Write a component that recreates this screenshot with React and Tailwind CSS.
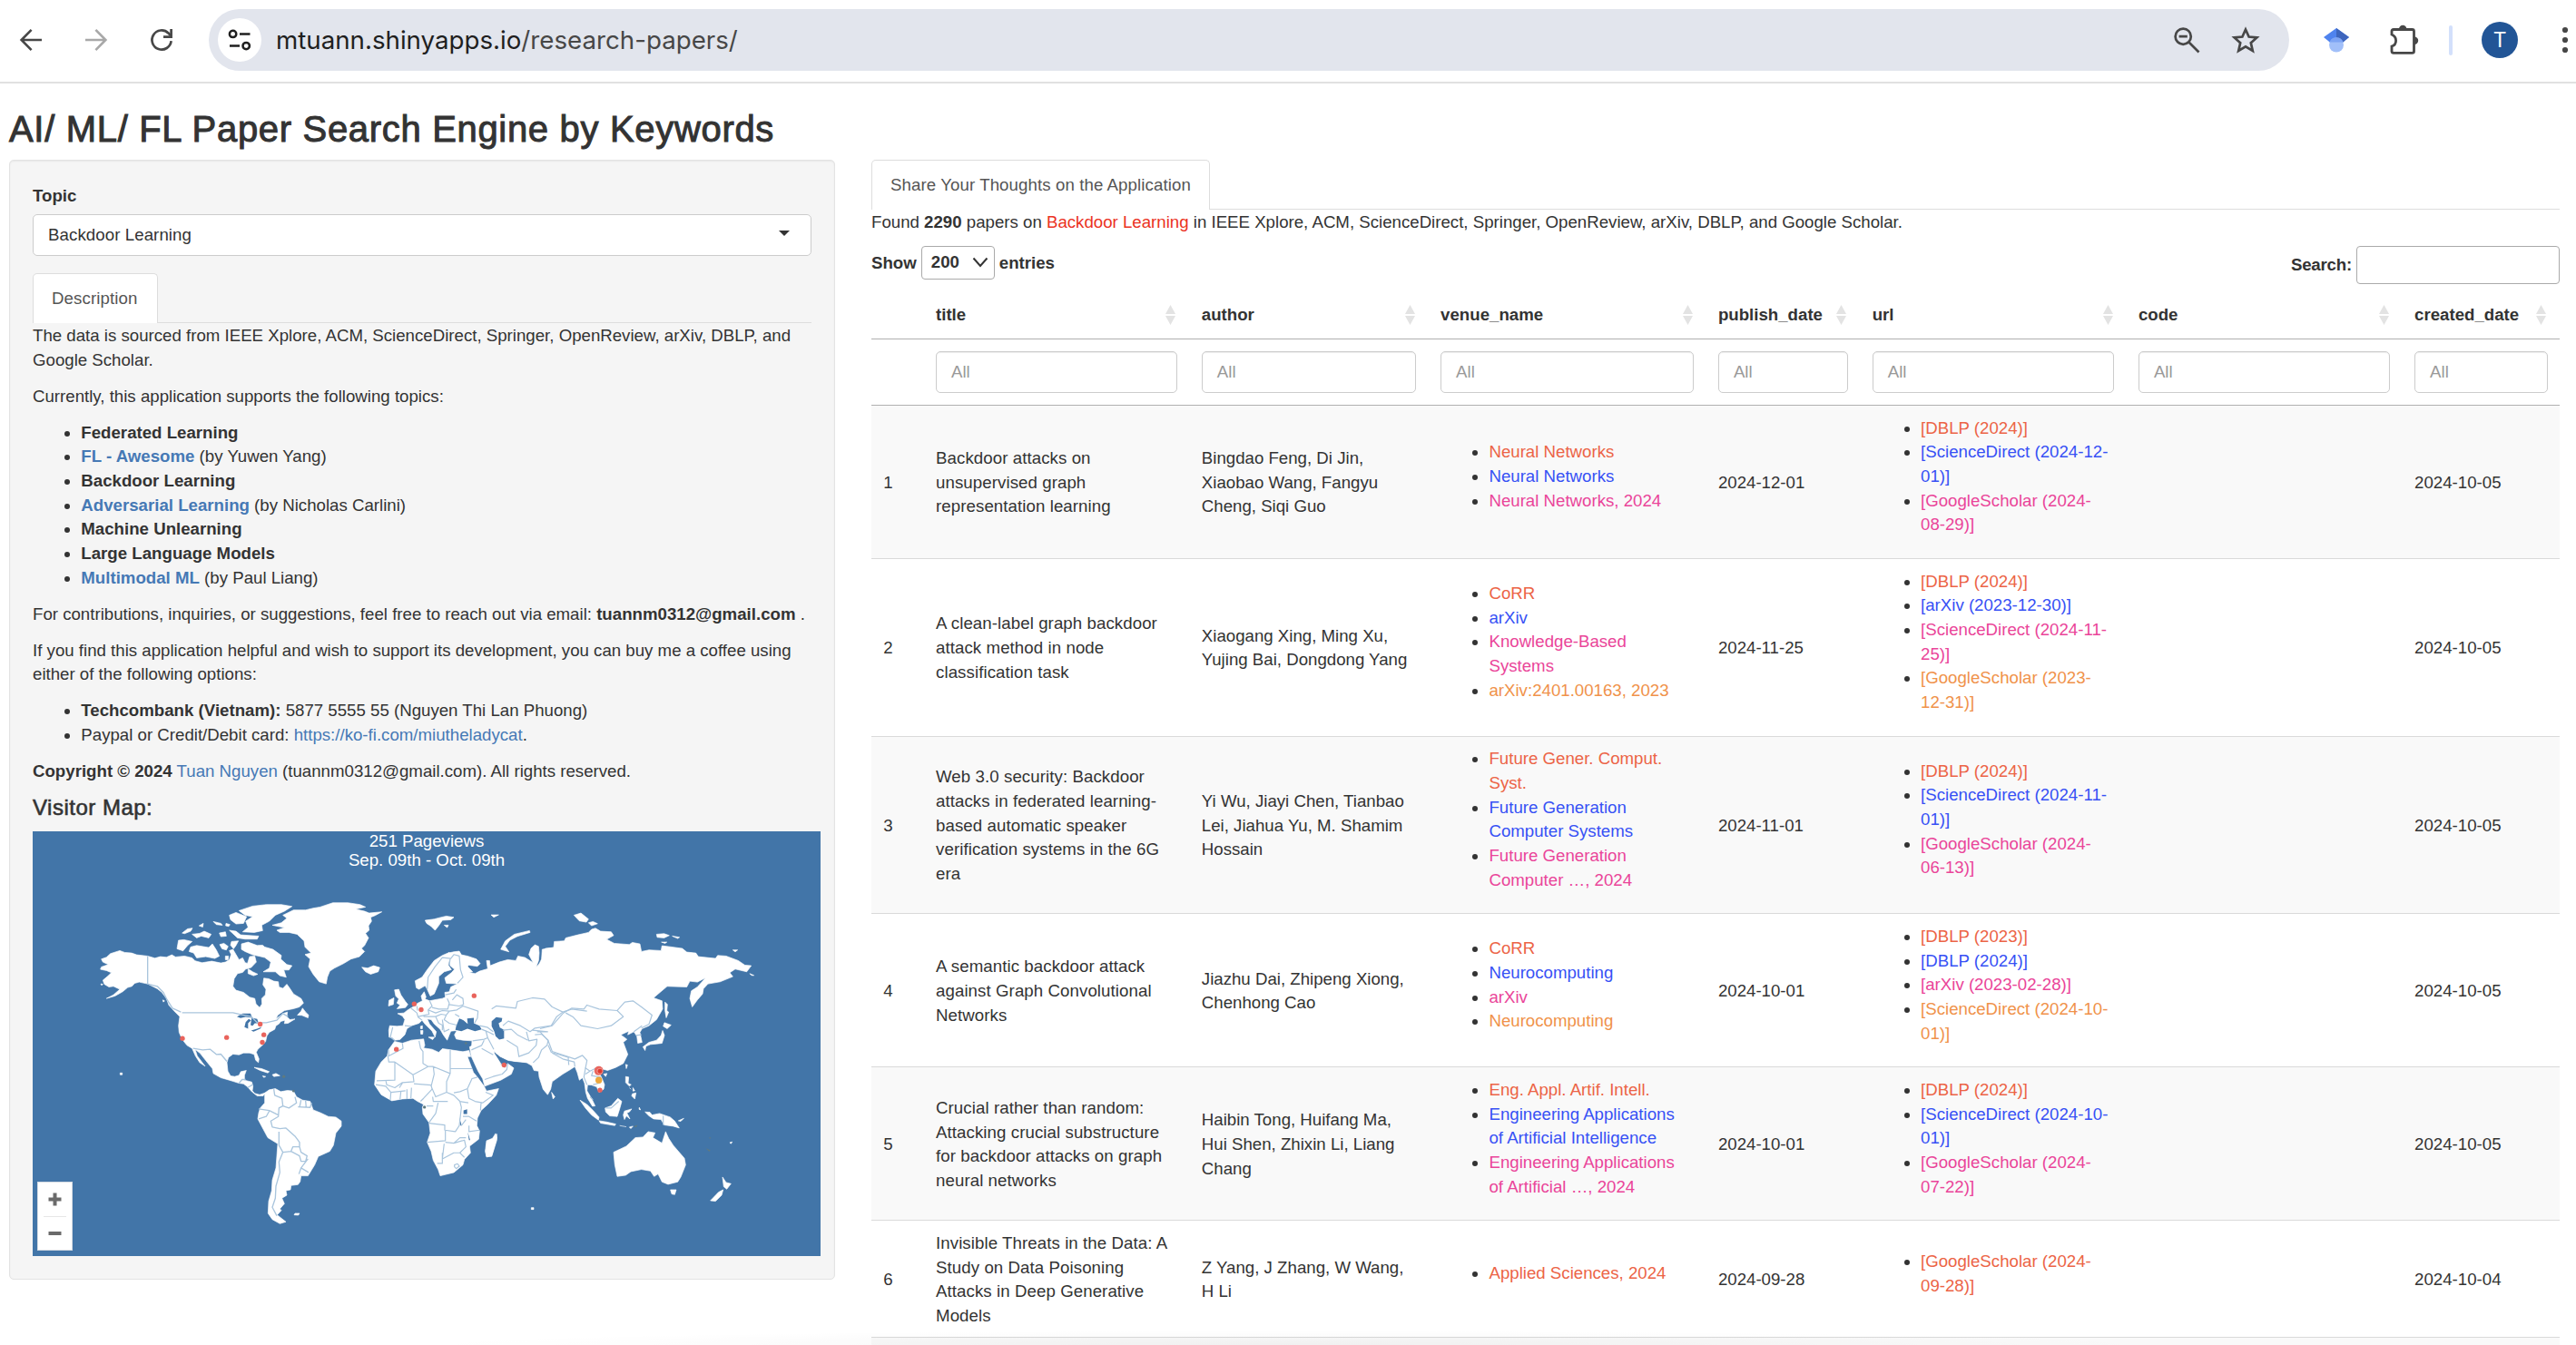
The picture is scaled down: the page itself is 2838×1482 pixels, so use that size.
import React from "react";

const O = "text-[#ec6446]";
const B = "text-[#3751f5]";
const P = "text-[#ea4599]";
const Y = "text-[#f0924a]";
const tones = [O, B, P, Y];

const papers = [
  {
    title: ["Backdoor attacks on", "unsupervised graph", "representation learning"],
    author: ["Bingdao Feng, Di Jin,", "Xiaobao Wang, Fangyu", "Cheng, Siqi Guo"],
    venue: [["Neural Networks"], ["Neural Networks"], ["Neural Networks, 2024"]],
    published: "2024-12-01",
    url: [["[DBLP (2024)]"], ["[ScienceDirect (2024-12-", "01)]"], ["[GoogleScholar (2024-", "08-29)]"]],
    created: "2024-10-05",
  },
  {
    title: ["A clean-label graph backdoor", "attack method in node", "classification task"],
    author: ["Xiaogang Xing, Ming Xu,", "Yujing Bai, Dongdong Yang"],
    venue: [["CoRR"], ["arXiv"], ["Knowledge-Based", "Systems"], ["arXiv:2401.00163, 2023"]],
    published: "2024-11-25",
    url: [["[DBLP (2024)]"], ["[arXiv (2023-12-30)]"], ["[ScienceDirect (2024-11-", "25)]"], ["[GoogleScholar (2023-", "12-31)]"]],
    created: "2024-10-05",
  },
  {
    title: ["Web 3.0 security: Backdoor", "attacks in federated learning-", "based automatic speaker", "verification systems in the 6G", "era"],
    author: ["Yi Wu, Jiayi Chen, Tianbao", "Lei, Jiahua Yu, M. Shamim", "Hossain"],
    venue: [["Future Gener. Comput.", "Syst."], ["Future Generation", "Computer Systems"], ["Future Generation", "Computer …, 2024"]],
    published: "2024-11-01",
    url: [["[DBLP (2024)]"], ["[ScienceDirect (2024-11-", "01)]"], ["[GoogleScholar (2024-", "06-13)]"]],
    created: "2024-10-05",
  },
  {
    title: ["A semantic backdoor attack", "against Graph Convolutional", "Networks"],
    author: ["Jiazhu Dai, Zhipeng Xiong,", "Chenhong Cao"],
    venue: [["CoRR"], ["Neurocomputing"], ["arXiv"], ["Neurocomputing"]],
    published: "2024-10-01",
    url: [["[DBLP (2023)]"], ["[DBLP (2024)]"], ["[arXiv (2023-02-28)]"], ["[ScienceDirect (2024-10-", "01)]"]],
    created: "2024-10-05",
  },
  {
    title: ["Crucial rather than random:", "Attacking crucial substructure", "for backdoor attacks on graph", "neural networks"],
    author: ["Haibin Tong, Huifang Ma,", "Hui Shen, Zhixin Li, Liang", "Chang"],
    venue: [["Eng. Appl. Artif. Intell."], ["Engineering Applications", "of Artificial Intelligence"], ["Engineering Applications", "of Artificial …, 2024"]],
    published: "2024-10-01",
    url: [["[DBLP (2024)]"], ["[ScienceDirect (2024-10-", "01)]"], ["[GoogleScholar (2024-", "07-22)]"]],
    created: "2024-10-05",
  },
  {
    title: ["Invisible Threats in the Data: A", "Study on Data Poisoning", "Attacks in Deep Generative", "Models"],
    author: ["Z Yang, J Zhang, W Wang,", "H Li"],
    venue: [["Applied Sciences, 2024"]],
    published: "2024-09-28",
    url: [["[GoogleScholar (2024-", "09-28)]"]],
    created: "2024-10-04",
  },
];

const columns = ["title", "author", "venue_name", "publish_date", "url", "code", "created_date"];

function Lines({ lines }) {
  return lines.map((l, i) => (
    <span key={i} className="block whitespace-nowrap">{l}</span>
  ));
}

function TonedList({ items }) {
  return (
    <ul className="mb-[13.33px] list-disc pl-[53.33px]">
      {items.map((lines, i) => (
        <li key={i}>
          <span className={tones[i]}>
            {lines.map((l, j) => (
              <React.Fragment key={j}>
                {j > 0 && <br />}
                <span className="whitespace-nowrap">{l}</span>
              </React.Fragment>
            ))}
          </span>
        </li>
      ))}
    </ul>
  );
}

function BrowserBar() {
  return (
    <header className="flex h-[92px] items-center border-b-2 border-[#e1e1e1] bg-white pb-[2px]">
      <svg className="ml-[20px] size-[28px] shrink-0" viewBox="0 0 28 28" fill="none" stroke="#474747" strokeWidth="2.6">
        <path d="M26 14H4M14.6 2.8L3.6 14L14.6 25.2" />
      </svg>
      <svg className="ml-[44px] size-[28px] shrink-0" viewBox="0 0 28 28" fill="none" stroke="#a8a8a8" strokeWidth="2.6">
        <path d="M2 14H24M13.4 2.8L24.4 14L13.4 25.2" />
      </svg>
      <svg className="ml-[44px] size-[28px] shrink-0" viewBox="0 0 28 28" fill="none" stroke="#474747" strokeWidth="2.7">
        <path d="M24.6 15.2A10.6 10.6 0 1 1 21.5 6.5L24 9" />
        <path d="M24.6 2V10.6H16" />
      </svg>
      <div className="ml-[38px] flex h-[68px] w-[2292px] shrink-0 items-center rounded-full bg-[#e2e5ed] pr-[31px] pl-[10px]">
        <div className="flex size-[48px] items-center justify-center rounded-full bg-white">
          <svg className="size-[28px]" viewBox="0 0 28 28" fill="none" stroke="#1f1f1f" strokeWidth="2.5">
            <circle cx="6.6" cy="7.4" r="3.7" />
            <path d="M14 7.4H25.5M3 20.6H14" />
            <circle cx="21.2" cy="20.6" r="3.7" />
          </svg>
        </div>
        <div className="ml-[16px] grow font-['Inter'] text-[27.7px] leading-[40px] whitespace-nowrap text-[#474747]">
          <span className="text-[#1f1f1f]">mtuann.shinyapps.io</span>/research-papers/
        </div>
        <svg className="h-[32px] w-[32px]" viewBox="0 0 32 32" fill="none" stroke="#474747" strokeWidth="2.7">
          <circle cx="12.2" cy="12.2" r="8.6" />
          <path d="M7.6 12.2H16.8M18.5 18.5L29.5 29.5" />
        </svg>
        <svg className="ml-[32px] h-[32px] w-[34px]" viewBox="0 0 34 32" fill="none" stroke="#474747" strokeWidth="2.7">
          <path d="M17 4.5L20.6 12.6L29.4 13.4L22.8 19.3L24.8 28L17 23.4L9.2 28L11.2 19.3L4.6 13.4L13.4 12.6Z" />
        </svg>
      </div>
      <svg className="ml-[38px] h-[28px] w-[28px] shrink-0" viewBox="0 0 28 28">
        <path d="M14 1L28 11L20 17.5H8L0 11Z" fill="#4f83ee" />
        <path d="M14 1L28 11L20 17.5H14Z" fill="#3e66bd" />
        <circle cx="14" cy="19.5" r="8" fill="#a1bff9" />
        <path d="M6.5 16.5A8 8 0 0 1 21.5 16.5Z" fill="#7da4f4" />
      </svg>
      <svg className="ml-[43px] h-[36px] w-[36px] shrink-0" viewBox="0 0 36 36" fill="none" stroke="#474747" strokeWidth="2.8">
        <path d="M4 12V8.5Q4 6.5 6 6.5H26.5Q28.5 6.5 28.5 8.5V30.5Q28.5 32.3 26.5 32.3H6Q4 32.3 4 30.5V25Q8.6 23.5 8.6 18.7Q8.6 14 4 12Z" />
        <path d="M12 6A4.2 4.2 0 0 1 20.4 6ZM29 14.5A4.2 4.2 0 0 1 29 22.9Z" fill="#474747" stroke="none" />
      </svg>
      <div className="ml-[31px] h-[33px] w-[4px] shrink-0 rounded-full bg-[#d3e0fb]" />
      <div className="ml-[32px] flex size-[40px] shrink-0 items-center justify-center rounded-full bg-[#225596] font-['Roboto'] text-[23px] leading-none text-white">
        T
      </div>
      <svg className="ml-[48px] h-[30px] w-[8px] shrink-0" viewBox="0 0 8 30" fill="#474747">
        <circle cx="4" cy="4" r="3.1" />
        <circle cx="4" cy="15" r="3.1" />
        <circle cx="4" cy="26" r="3.1" />
      </svg>
    </header>
  );
}

const landWest = [
  "M245 470L262 464L275 452L306 442L322 448L345 450L362 456L398 460L422 467L440 462L460 464L478 456L490 463L520 460L545 466L555 476L578 482L610 477L640 483L655 480L668 472L674 455L668 442L680 438L690 455L700 472L712 466L720 482L728 484L735 462L752 460L757 480L740 498L722 503L712 514L695 518L684 535L680 560L690 573L715 580L735 596L752 600L756 618L768 630L776 618L775 600L787 588L789 570L779 555L782 533L798 535L815 543L830 545L832 562L845 567L858 553L868 567L880 585L905 600L913 615L900 628L880 634L850 640L828 655L822 668L845 650L860 645L858 660L868 670L885 668L862 682L850 683L852 672L838 676L832 684L822 690L818 702L800 712L792 724L788 742L780 752L762 768L757 778L766 800L764 812L755 804L750 785L735 780L715 780L700 786L680 784L665 795L660 812L663 840L672 856L686 858L700 854L706 842L724 838L718 854L718 870L742 876L746 890L744 905L752 914L768 918L786 912L780 922L760 922L742 908L728 892L715 882L700 880L668 870L640 862L615 848L612 832L590 805L572 782L555 768L562 790L588 824L570 812L556 790L545 765L528 755L512 735L502 712L500 690L504 660L484 640L468 622L460 600L445 580L430 568L398 552L370 546L355 550L346 560L332 564L315 578L290 592L262 600L285 588L306 570L285 560L270 562L255 553L250 540L268 525L278 515L262 508L242 504L245 496L268 488L250 480Z",
  "M500 408L518 406L545 412L530 425L515 443L495 436Z",
  "M540 430L560 425L600 432L612 420L625 440L635 460L620 468L590 462L560 466L550 450L535 445Z",
  "M512 384L530 370L546 368L540 378L520 386Z",
  "M545 388L570 385L585 378L608 388L600 400L575 394L560 400Z",
  "M615 346L640 352L645 358L625 356ZM657 352L670 356L666 362L656 360ZM568 360L582 352L580 364Z",
  "M668 325L690 316L725 330L715 352L690 354L672 340Z",
  "M700 310L745 295L790 290L840 290L875 296L850 312L820 325L800 345L775 358L778 376L750 382L712 380L730 365L722 345L745 330L720 325Z",
  "M668 375L690 378L705 390L765 394L760 404L720 404L695 400Z",
  "M635 384L655 380L658 394L640 396ZM636 422L650 418L664 428L658 440L644 436ZM675 412L698 410L690 425L682 436L672 424ZM655 460L665 460L664 472L655 472Z",
  "M708 420L730 414L760 425L778 424L785 430L812 438L840 458L838 470L858 488L875 492L865 506L848 506L856 530L835 525L820 512L780 512L800 500L805 480L785 465L765 460L745 456L720 445L708 438Z",
  "M730 502L745 512L762 520L748 525L730 518Z",
  "M810 358L840 350L858 335L845 325L880 308L920 308L945 302L968 298L1010 284L1060 284L1100 290L1118 298L1085 305L1115 312L1130 318L1172 314L1150 326L1135 332L1138 345L1128 360L1130 375L1118 385L1128 400L1115 425L1105 435L1115 445L1098 462L1070 470L1045 485L1015 500L1000 510L992 530L988 552L965 545L945 520L930 495L935 470L918 455L938 450L918 430L915 410L892 388L865 382L835 382L825 375L850 366Z",
  "M1106 497L1125 500L1145 492L1165 498L1160 512L1135 520L1118 512Z",
  "M893 655L905 642L910 632L920 645L930 655L928 664L908 656Z",
  "M750 828L775 832L800 842L795 846L770 838ZM810 852L822 848L835 855L815 858ZM778 856L788 858L782 861Z",
  "M785 912L800 902L820 898L838 908L860 904L880 906L890 925L910 936L935 940L945 968L970 978L995 990L1020 992L1038 1005L1038 1022L1020 1045L1012 1085L1000 1105L962 1122L950 1150L928 1186L905 1186L902 1205L895 1215L872 1218L870 1232L855 1235L858 1250L842 1260L850 1278L835 1295L840 1300L826 1315L855 1338L835 1344L810 1330L796 1310L798 1270L808 1235L810 1200L822 1160L828 1080L795 1060L762 998L765 978L770 962L785 945Z",
  "M885 1310L900 1310L896 1316L882 1315Z",
  "M307 846L314 846L314 852L307 852ZM448 605L454 608L450 612ZM243 552L250 553L246 557Z",
];

const bordersWest =
  "M398 460V552L430 560L450 580L462 604L480 632L508 645M512 647H680L700 652L740 660L760 680L790 680L825 672L845 650L862 660M548 765L580 770L605 768L625 785L640 784L660 808M700 880L710 868L722 868M728 895L745 885M815 900L818 920L842 930L845 955L832 962L830 990L805 1005L810 1025L835 1030L855 1028L885 1055L900 1075L900 1090L878 1090L872 1105L845 1108L832 1085L832 1040M765 965L800 970L830 985M765 998L790 990L800 972M845 955L865 962L890 945L885 925M905 936L900 960M920 938L922 960M940 945L935 960L895 958M872 1105L900 1120L905 1138L920 1138L925 1120L905 1108L900 1090M928 1130L905 1160L898 1180M905 1160L930 1175M845 1108L832 1140L835 1175L822 1220L820 1260L810 1290L825 1318";

const landEurope = [
  "M88 270L112 272L132 270L138 250L130 238L114 230L135 228L145 220L158 212L170 205L180 196L196 188L192 172L202 158L208 175L205 182L220 188L240 184L262 180L272 176L270 160L285 158L290 142L312 132L275 130L270 112L292 95L302 84L288 72L282 50L282 30L300 26L318 24L325 36L345 40L375 50L387 65L378 74L350 70L345 74L362 92L350 94L370 98L385 90L412 82L408 55L418 55L420 72L450 60L478 52L505 55L512 40L535 45L562 62L548 35L555 15L568 3L580 8L582 30L580 55L572 76L590 60L594 30L602 15L760 0V360L700 380L650 390L600 400L560 392L530 390L500 388L472 380L455 372L440 362L428 348L400 345L358 348L360 320L330 318L308 314L302 300L310 286L290 288L285 300L278 318L265 300L255 282L235 264L225 250L212 248L220 265L242 290L238 308L228 288L205 265L195 252L185 262L160 270L145 280L138 300L122 316L104 318L98 310L86 308L85 285Z",
  "M172 122L195 110L212 85L235 55L262 38L285 28L282 70L292 85L268 92L250 108L250 130L235 165L222 172L212 150L205 138L185 150L176 145Z",
  "M104 152L118 150L125 168L140 190L148 200L140 210L112 214L122 202L112 195L118 182L108 172Z",
  "M86 186L102 178L100 200L84 205Z",
  "M190 272L196 270L196 280L190 280ZM190 286L198 286L197 298L191 298ZM216 308L236 308L230 316Z",
  "M358 372L352 340L400 318L432 348L434 362L455 395L470 407L478 395L498 410L490 430L455 450L402 470L395 445L380 420Z",
  "M104 322L130 328L160 318L200 314L204 335L200 344L228 348L250 358L262 346L290 350L330 356L350 352L356 372L345 372L365 425L378 440L400 470L408 486L448 478L440 500L412 530L390 550L378 575L376 600L385 618L382 645L352 668L355 690L335 712L330 730L300 755L255 766L248 745L232 715L225 685L212 655L222 625L218 590L198 562L196 540L200 530L180 520L165 510L130 512L95 518L60 498L38 465L42 420L60 390L80 370L84 350Z",
  "M438 626L442 640L425 700L408 704L404 685L408 650L428 642Z",
];

const seas = [
  "M308 270L318 246L332 252L346 264L344 246L366 244L366 262L385 270L392 282L370 288L345 280L325 288L305 284Z",
  "M425 255L440 242L460 245L458 256L448 262L452 276L466 284L466 312L450 316L438 305L434 290L425 272Z",
  "M332 550L344 546L344 562L332 562ZM318 572L326 600L322 600ZM346 622L354 648L350 648Z",
];

const bordersEurope =
  "M212 150L215 110L238 75L262 45L290 48L300 35L318 40L322 85L330 110L312 130M288 48L285 70M104 318L90 308L98 275M138 270L160 272M158 212L178 228L182 242L195 252M178 205L180 220M220 188L228 205L215 218L218 232L200 236L182 240M228 210L250 215L280 215L285 195L278 180M272 168L300 162L308 150M295 185L310 168L330 180L332 200L318 205L285 200M215 218L240 228L262 220L285 222M200 240L240 240L258 232L275 235L285 222L310 218L330 205L380 222L378 245L368 262M275 235L268 250L285 262L310 268M240 240L250 262L262 268L262 285M262 250L268 290L285 282M304 232L318 240M385 270L410 275L430 290M392 282L412 290L432 300M405 285L412 310L400 315L362 320M412 310L432 348M358 350L392 335L400 318M392 345L430 366M425 215L440 205L505 212L510 190L560 178L600 182L625 208L660 225L640 240L622 270L568 278L552 290L520 270L480 255L462 270M462 285L490 282L510 300L545 318M660 225L690 215L740 222M540 290L548 320L575 315L572 335L548 360L515 372L510 340L475 318M575 290L610 290L560 285M568 300L590 298L612 318L608 335L590 350L580 375L562 392M612 335L622 358L680 375M402 448L430 438L460 430L475 415L478 395M455 395L470 408M130 328L132 345L85 370L84 350M185 320L190 345L198 355V395L215 405L165 432L105 390V450L45 452M105 390H85L82 370M215 405L232 405L288 428V350M290 412H360M288 428L276 455V490L240 505L225 470L235 430L232 405M165 432L168 455L130 458L105 475L78 465L75 450M168 462L225 466L228 480L200 510L190 520M160 475L158 510M145 480V512M125 488L122 514M92 490L90 516M42 465L75 470L92 490L140 485M120 475L130 460M300 492L320 488L345 478L360 445L378 440M345 480L350 510L370 520L395 525L430 500L405 490M276 490L300 500L320 520L348 525M230 505L232 520L280 520M320 520L325 540L318 600L305 620L270 615V598L218 592M248 525L240 560L218 590M210 535L232 535M390 525L388 550M330 570H350L375 585M350 600V620L385 615M272 615V650L212 655M272 655L300 658L320 640L340 640M300 658L335 648L340 670L320 690L300 690L262 710L268 660M245 725H262V690M320 690L335 705M302 730L312 726L318 734L308 742L302 736ZM340 580L325 600";

const landAsia = [
  "M395 500L410 470L412 438L450 432L452 412L485 410L490 400L530 390L565 382L575 372L588 368L605 378L640 380L648 392L625 405L650 418L700 422L710 415L735 420L740 445L765 440L805 442L808 426L840 430L875 435L890 447L920 450L928 462L985 468L992 458L1020 460L1060 475L1082 490L1103 492L1088 512L1050 503L1032 515L1042 528L1000 545L960 552L945 568L942 585L925 605L908 628L900 600L905 575L925 562L952 532L925 546L900 543L890 562L825 560L780 598L808 608L810 635L790 670L765 690L742 700L735 712L742 745L728 748L725 725L715 710L695 720L698 708L672 720L692 735L680 745L695 785L680 815L655 828L628 838L618 835L605 833L600 845L610 865L618 885L615 900L600 910L592 892L575 886L562 885L560 905L575 930L587 955L578 956L562 930L556 910L552 880L545 862L535 870L528 845L520 825L505 835L480 850L445 875L440 900L430 918L415 900L402 860L400 840L385 838L378 822L360 812L330 808L300 805L270 790L255 760L250 600Z",
  "M275 438L290 410L320 388L370 376L372 382L330 395L305 408L290 428L302 446Z",
  "M25 342L55 338L70 334L95 328L120 332L110 340L82 342L70 360L58 375L45 362L30 352ZM88 358L102 358L98 366ZM243 324L268 324L252 332Z",
  "M517 325L540 318L565 338L558 348L535 344ZM565 350L580 346L595 353L575 360ZM790 388L815 386L832 392L815 400L792 398ZM842 394L866 398L860 402ZM806 414L824 414L818 418ZM1042 440L1058 440L1050 446ZM1098 518L1112 524L1104 524Z",
  "M818 612L826 620L824 640L830 645L822 664L818 640ZM816 680L838 688L825 700L812 692ZM810 706L816 722L808 748L790 750L770 752L755 758L752 772L745 760L765 745L790 738L805 722Z",
  "M443 910L454 925L448 932ZM688 818L694 820L690 832ZM688 858L698 860L696 880L706 885L700 890L688 878ZM710 915L722 912L718 932L708 922ZM700 895L706 900M712 895L718 905L712 906ZM615 850L626 848L622 858Z",
  "M537 936L560 950L580 970L600 992L598 1002L575 985L555 962ZM600 1004L625 1008L655 1015L652 1020L605 1012Z",
  "M620 962L640 955L662 930L675 940L668 965L660 990L635 988L622 975Z",
  "M680 985L684 972L708 965L700 975L692 978L702 998L690 988L684 1000ZM733 960L737 968L732 966ZM668 1020L690 1024M700 1025L712 1022L705 1030Z",
  "M752 975L768 976L775 985L800 980L835 992L850 1005L865 1028L845 1022L815 1018L805 1000L780 998L765 988ZM862 1004L880 996L870 1006Z",
  "M648 1108L690 1088L720 1060L745 1058L762 1040L785 1044L778 1060L808 1078L820 1040L830 1062L845 1085L882 1128L886 1150L870 1190L860 1206L828 1214L808 1206L795 1180L782 1188L770 1170L740 1165L705 1172L688 1184L660 1188L652 1150Z",
  "M836 1232L855 1232L850 1248L840 1246Z",
  "M1008 1190L1020 1208L1036 1212L1022 1230L1012 1222ZM968 1268L995 1240L1010 1232L1005 1250L985 1270Z",
  "M262 1048L262 1068L245 1122L228 1122L225 1105L230 1072L248 1065Z",
  "M376 1291L384 1291L384 1297L376 1297ZM1032 1076L1040 1074L1036 1080Z",
];

const bordersAsia =
  "M482 648L510 632L550 635L560 622L600 635L660 640L685 612L712 608L740 628L775 655L765 685L740 698M490 648L515 662L540 690L595 700L640 690L680 660L660 640M405 700L445 690L482 648M405 710L432 740L445 775L520 800L545 788L560 805L555 830L570 840L600 825L610 832M445 780L480 800L518 810L520 825M498 795L500 820M555 830L550 860L560 885M580 840L575 855L605 860L600 880L580 885M570 840L555 850M715 710L742 690M722 722L740 720M622 962L640 962L665 940M812 988L812 1018M580 935L570 925";

const pins = [
  [513, 732], [659, 729], [770, 685], [782, 720], [777, 745], [1279, 618], [1302, 637], [1220, 768], [1477, 591], [1576, 820],
];

function VisitorMap() {
  return (
    <div className="relative h-[468px] w-[868px] bg-[#4275a8]">
      <svg className="block h-full w-full" viewBox="18 48 2604 1403" preserveAspectRatio="none">
        <g fill="#fff" stroke="#fff" strokeWidth="2" strokeLinejoin="round">
          {landWest.map((d, i) => <path key={i} d={d} />)}
        </g>
        <g fill="#4275a8">
          <path d="M693 660L712 650L738 650L744 664L722 661L705 665ZM718 695L722 678L732 668L740 672L730 682L730 700ZM742 664L760 668L765 682L752 682L745 690L738 688ZM740 706L760 700L775 694L770 700L748 710Z" />
        </g>
        <path d={bordersWest} fill="none" stroke="#a9c5dd" strokeWidth="4" strokeLinejoin="round" />
        <g transform="translate(1110 420)">
          <g fill="#fff" stroke="#fff" strokeWidth="2" strokeLinejoin="round">
            {landEurope.map((d, i) => <path key={i} d={d} />)}
          </g>
        </g>
        <g transform="translate(1290 0)" fill="#fff" stroke="#fff" strokeWidth="2" strokeLinejoin="round">
          {landAsia.map((d, i) => <path key={i} d={d} />)}
        </g>
        <g transform="translate(1110 420)">
          <g fill="#4275a8">{seas.map((d, i) => <path key={i} d={d} />)}</g>
          <path d={bordersEurope} fill="none" stroke="#a9c5dd" strokeWidth="3.6" strokeLinejoin="round" />
        </g>
        <path transform="translate(1290 0)" d={bordersAsia} fill="none" stroke="#a9c5dd" strokeWidth="3.6" strokeLinejoin="round" />
        <g fill="#5f7a80">
          <circle cx="848" cy="858" r="5" />
          <circle cx="880" cy="906" r="4" />
          <circle cx="1313" cy="959" r="5" />
          <circle cx="1450" cy="748" r="4" />
          <path d="M2242 1094L2258 1102L2254 1106ZM2004 1022L2018 1018L2012 1026ZM2254 1058L2260 1060L2256 1064Z" />
        </g>
        <g fill="#e9635c">
          {pins.map(([x, y]) => <circle key={x} cx={x} cy={y} r="8" />)}
          <circle cx="1893" cy="903" r="8" />
        </g>
        <circle cx="1889" cy="839" r="15" fill="#e9675f" />
        <circle cx="1893" cy="840" r="9" fill="#de3a30" stroke="#f3b5b0" strokeWidth="2" />
        <circle cx="1889" cy="870" r="11" fill="#eda73c" />
      </svg>
      <div className="absolute inset-x-0 top-0 text-center text-[18.67px] leading-[21.33px] text-white">
        <div>251 Pageviews</div>
        <div>Sep. 09th - Oct. 09th</div>
      </div>
      <div className="absolute bottom-[6px] left-[5px] flex h-[76px] w-[39px] flex-col items-center border border-[#d4dbe2] bg-white">
        <svg className="h-[37px] w-[37px]" viewBox="0 0 37 37" stroke="#6a6a6a" strokeWidth="4">
          <path d="M11.5 18.5H25.5M18.5 11.5V25.5" />
        </svg>
        <div className="h-px w-[25px] bg-[#e6e6e6]" />
        <svg className="h-[36px] w-[37px]" viewBox="0 0 37 36" stroke="#6a6a6a" strokeWidth="4">
          <path d="M11.5 18H25.5" />
        </svg>
      </div>
    </div>
  );
}

function Sidebar() {
  return (
    <aside className="h-[1234px] w-[910px] shrink-0 rounded-[5px] border border-[#e3e3e3] bg-[#f5f5f5] px-[25px] pt-[26px] shadow-[inset_0_1px_2px_rgba(0,0,0,0.06)]">
      <div className="w-[858px]">
        <div className="mb-[6.67px] font-bold">Topic</div>
        <div className="mb-[19px] flex h-[45.33px] items-center justify-between rounded-[5px] border border-[#ccc] bg-white pr-[23px] pl-[16px]">
          <span className="tracking-[0.08px]">Backdoor Learning</span>
          <svg className="mb-[4px] h-[6px] w-[12px]" viewBox="0 0 12 6"><path d="M0 0H12L6 6Z" fill="#333" /></svg>
        </div>
        <div className="flex h-[55.33px] border-b border-[#ddd]">
          <div className="-mb-px h-[55.33px] w-[138px] rounded-t-[5px] border border-b-0 border-[#ddd] bg-white px-[20px] pt-[14px] tracking-[0.1px] text-[#555]">
            Description
          </div>
        </div>
        <div className="pt-px whitespace-nowrap">
          <p className="mb-[13.33px]">
            The data is sourced from IEEE Xplore, ACM, ScienceDirect, Springer, OpenReview, arXiv, DBLP, and<br />Google Scholar.
          </p>
          <p className="mb-[13.33px]">Currently, this application supports the following topics:</p>
          <ul className="mb-[13.33px] list-disc pl-[53.33px]">
            <li><b>Federated Learning</b></li>
            <li><b className="text-[#4679b5]">FL - Awesome</b> (by Yuwen Yang)</li>
            <li><b>Backdoor Learning</b></li>
            <li><b className="text-[#4679b5]">Adversarial Learning</b> (by Nicholas Carlini)</li>
            <li><b>Machine Unlearning</b></li>
            <li><b>Large Language Models</b></li>
            <li><b className="text-[#4679b5]">Multimodal ML</b> (by Paul Liang)</li>
          </ul>
          <p className="mb-[13.33px]">
            For contributions, inquiries, or suggestions, feel free to reach out via email: <b>tuannm0312@gmail.com</b> .
          </p>
          <p className="mb-[13.33px]">
            If you find this application helpful and wish to support its development, you can buy me a coffee using<br />either of the following options:
          </p>
          <ul className="mb-[13.33px] list-disc pl-[53.33px]">
            <li><b>Techcombank (Vietnam):</b> 5877 5555 55 (Nguyen Thi Lan Phuong)</li>
            <li>Paypal or Credit/Debit card: <span className="text-[#4679b5]">https://ko-fi.com/miutheladycat</span>.</li>
          </ul>
          <p className="mb-[13.33px]">
            <b>Copyright © 2024</b> <span className="text-[#4679b5]">Tuan Nguyen</span> (tuannm0312@gmail.com). All rights reserved.
          </p>
        </div>
        <h4 className="mb-[12.33px] text-[24px] leading-[26.4px] tracking-[0.5px] [-webkit-text-stroke:0.6px]">Visitor Map:</h4>
      </div>
      <VisitorMap />
    </aside>
  );
}

function PaperTable() {
  return (
    <table className="w-[1860px] table-fixed border-separate border-spacing-0 text-left">
      <colgroup>
        <col className="w-[57.7px]" />
        <col className="w-[292.8px]" />
        <col className="w-[263.3px]" />
        <col className="w-[305.8px]" />
        <col className="w-[169.8px]" />
        <col className="w-[293.2px]" />
        <col className="w-[304.2px]" />
        <col className="w-[173.2px]" />
      </colgroup>
      <thead>
        <tr className="h-[54px]">
          <th className="border-b border-[#b0b0b0]" />
          {columns.map((c) => (
            <th key={c} className="border-b border-[#b0b0b0] p-0 pt-px pl-[13.33px] font-bold">
              <div className="flex items-center justify-between pr-[15px]">
                {c}
                <svg className="h-[22px] w-[11px]" viewBox="0 0 11 22" fill="#e3e3e3">
                  <path d="M5.5 0L11 10H0ZM5.5 22L0 12H11Z" />
                </svg>
              </div>
            </th>
          ))}
        </tr>
        <tr className="h-[73px]">
          <td className="border-b border-[#b0b0b0]" />
          {columns.map((c) => (
            <td key={c} className="border-b border-[#b0b0b0] p-0 px-[13.33px]">
              <div className="flex h-[46px] items-center rounded-[5px] border border-[#ccc] bg-white pl-[16px] text-[#999] shadow-[inset_0_1px_1px_rgba(0,0,0,0.075)]">
                All
              </div>
            </td>
          ))}
        </tr>
      </thead>
      <tbody>
        {papers.map((p, i) => (
          <tr key={i} className="odd:bg-[#f9f9f9] [&>td]:border-b [&>td]:border-[#dadada] [&>td]:px-[13.33px] [&>td]:pt-[11.67px] [&>td]:pb-[9.67px] [&>td]:align-middle">
            <td>{i + 1}</td>
            <td className="tracking-[0.08px]"><Lines lines={p.title} /></td>
            <td><Lines lines={p.author} /></td>
            <td><TonedList items={p.venue} /></td>
            <td>{p.published}</td>
            <td><TonedList items={p.url} /></td>
            <td />
            <td>{p.created}</td>
          </tr>
        ))}
        <tr className="h-[169px] bg-[#f9f9f9]"><td colSpan={8} /></tr>
      </tbody>
    </table>
  );
}

function Results() {
  return (
    <main className="ml-[40px] w-[1860px] shrink-0">
      <div className="flex h-[55px] border-b border-[#ddd]">
        <div className="-mb-px h-[55px] w-[373px] rounded-t-[5px] border border-b-0 border-[#ddd] bg-white px-[20px] pt-[14px] tracking-[0.09px] whitespace-nowrap text-[#555]">
          Share Your Thoughts on the Application
        </div>
      </div>
      <p className="pt-px">
        Found <b>2290</b> papers on <span className="text-[#eb3223]">Backdoor Learning</span> in IEEE Xplore, ACM, ScienceDirect, Springer, OpenReview, arXiv, DBLP, and Google Scholar.
      </p>
      <div className="mt-[12.33px] flex h-[49px] items-start justify-between font-bold">
        <div className="flex items-center gap-[5px]">
          <span className="pt-px">Show</span>
          <div className="flex h-[37px] w-[81px] items-center justify-between rounded-[4px] border border-[#aaa] pr-[6px] pl-[10px]">
            200
            <svg className="h-[12px] w-[18px]" viewBox="0 0 18 12" fill="none" stroke="#333" strokeWidth="2"><path d="M1.5 1.5L9 10L16.5 1.5" /></svg>
          </div>
          <span className="pt-px">entries</span>
        </div>
        <div className="flex items-center gap-[5px]">
          <span className="pt-px tracking-[-0.2px]">Search:</span>
          <div className="h-[42px] w-[224px] rounded-[4px] border border-[#aaa] bg-white" />
        </div>
      </div>
      <PaperTable />
    </main>
  );
}

export default function App() {
  return (
    <div className="relative h-[1482px] w-[2838px] overflow-hidden bg-white font-['Liberation_Sans',Arial,sans-serif] text-[18.67px] leading-[26.67px] text-[#333]">
      <BrowserBar />
      <h2 className="mt-[27.67px] mb-[12.33px] ml-[10px] text-[40px] leading-[44px] tracking-[0.68px] whitespace-nowrap [-webkit-text-stroke:1px]">
        AI/ ML/ FL Paper Search Engine by Keywords
      </h2>
      <div className="ml-[10px] flex items-start">
        <Sidebar />
        <Results />
      </div>
      <div className="absolute bottom-0 left-[450px] h-[16px] w-[1940px] bg-[radial-gradient(ellipse_50%_100%_at_50%_100%,rgba(0,0,0,0.035),transparent)]" />
    </div>
  );
}
